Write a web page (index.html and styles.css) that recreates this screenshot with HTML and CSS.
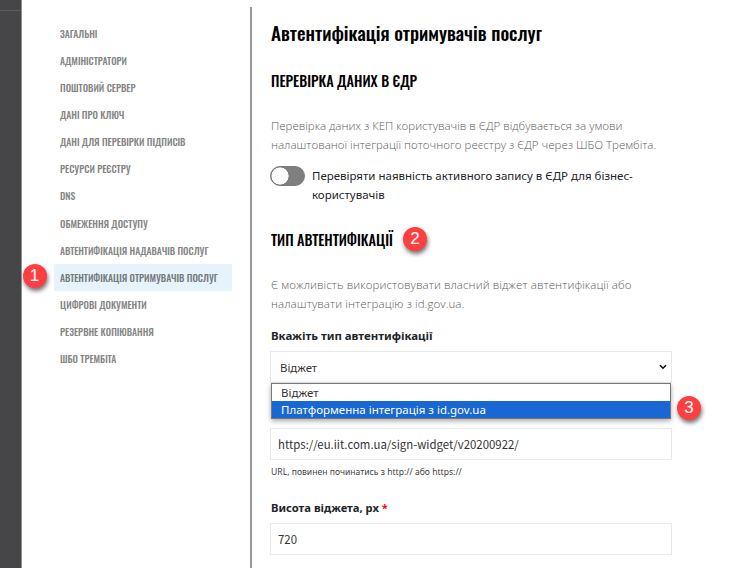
FILE: index.html
```html
<!DOCTYPE html>
<html lang="uk">
<head>
<meta charset="utf-8">
<title>Автентифікація отримувачів послуг</title>
<link rel="stylesheet" href="styles.css">
</head>
<body>
<div class="app">
  <aside class="rail"></aside>
  <nav class="menu">
    <a class="menu-item">Загальні</a>
    <a class="menu-item">Адміністратори</a>
    <a class="menu-item">Поштовий сервер</a>
    <a class="menu-item">Дані про ключ</a>
    <a class="menu-item">Дані для перевірки підписів</a>
    <a class="menu-item">Ресурси реєстру</a>
    <a class="menu-item">DNS</a>
    <a class="menu-item">Обмеження доступу</a>
    <a class="menu-item">Автентифікація надавачів послуг</a>
    <a class="menu-item active">Автентифікація отримувачів послуг<span class="badge badge-1">1</span></a>
    <a class="menu-item">Цифрові документи</a>
    <a class="menu-item">Резервне копіювання</a>
    <a class="menu-item">ШБО Трембіта</a>
  </nav>
  <main class="content">
    <h1>Автентифікація отримувачів послуг</h1>
    <h2>Перевірка даних в ЄДР</h2>
    <p class="note">Перевірка даних з КЕП користувачів в ЄДР відбувається за умови<br>налаштованої інтеграції поточного реєстру з ЄДР через ШБО Трембіта.</p>
    <div class="toggle-row">
      <span class="toggle"></span>
      <span class="toggle-label">Перевіряти наявність активного запису в ЄДР для бізнес-<br>користувачів</span>
    </div>
    <h2 class="type-title">Тип автентифікації<span class="badge badge-2">2</span></h2>
    <p class="note note-type">Є можливість використовувати власний віджет автентифікації або<br>налаштувати інтеграцію з id.gov.ua.</p>
    <div class="label">Вкажіть тип автентифікації</div>
    <div class="field select">
      <span>Віджет</span>
      <svg class="chevron" viewBox="0 0 8 6"><path d="M1 1.2 4 4.2 7 1.2" fill="none" stroke="#111" stroke-width="1.6"/></svg>
      <div class="options">
        <div class="option">Віджет</div>
        <div class="option selected">Платформенна інтеграція з id.gov.ua</div>
        <span class="badge badge-3">3</span>
      </div>
    </div>
    <div class="field url">https://eu.iit.com.ua/sign-widget/v20200922/</div>
    <div class="hint">URL, повинен починатись з http:// або https://</div>
    <div class="label label-height">Висота віджета, px <span class="required">*</span></div>
    <div class="field height">720</div>
  </main>
</div>
</body>
</html>
```
FILE: styles.css
```css
* { box-sizing: border-box; }
body { margin: 0; background: #fff; font-family: "Noto Sans", "Open Sans", sans-serif; color: #212529; }
.app { display: flex; width: 738px; height: 568px; overflow: hidden; }
.rail { flex: none; width: 22px; background: linear-gradient(#5a5a5c, #5a5a5c) 0 10px / 22px 1px no-repeat #464648; border-right: 1px solid #929294; }
.menu { flex: none; width: 228px; padding: 20px 18px 0 31.5px; }
.menu-item { display: block; position: relative; height: 27.08px; padding-left: 6.5px; font: 500 9.6px/28px Oswald, sans-serif; color: #858585; text-transform: uppercase; white-space: nowrap; }
.menu-item.active { background: #e6f3fb; color: #747a7e; }
.content { flex: 1; min-width: 0; margin-top: 7px; padding: 0 0 0 19px; border-left: 2px solid #9a9a9a; white-space: nowrap; }
h1 { margin: 12px 0 0; font: 500 19.14px/28px Oswald, sans-serif; color: #000; }
h2 { position: relative; margin: 22px 0 0; font: 500 14.3px/24px Oswald, sans-serif; color: #000; text-transform: uppercase; }
.note { margin: 23px 0 0; font-family: "Open Sans", sans-serif; font-weight: 300; font-size: 11.5px; line-height: 19px; color: #5c5c5c; }
.toggle-row { display: flex; gap: 7px; margin: 12px 0 0 -1px; }
.toggle { width: 35px; height: 20px; border-radius: 10px; border: 1px solid #7b7b7b; background: radial-gradient(circle at 9px 9px, #fff 8.3px, #7f7f7f 8.8px); }
.toggle-label { font-size: 11.49px; line-height: 19px; }
.type-title { margin-top: 24px; }
.note-type { margin-top: 23px; letter-spacing: .08px; }
.label { margin-top: 13px; font-size: 11.45px; font-weight: 700; line-height: 19px; }
.field { width: 402px; height: 32px; margin-left: -1px; border: 1px solid #e8e8f0; padding-left: 7px; font: 11.4px/31px "Noto Sans CJK JP", "Noto Sans", sans-serif; color: #333; }
.select { position: relative; margin-top: 6px; padding-left: 9px; font-family: "Noto Sans", sans-serif; }
.chevron { position: absolute; right: 4px; top: 12px; width: 8px; height: 6px; }
.options { position: absolute; z-index: 1; left: 0; top: 31px; width: 400px; height: 36px; border: 1px solid #777; background: #fff; box-shadow: 0 2px 5px rgba(0,0,0,.35); }
.option { height: 17px; padding-left: 9px; font-size: 11.5px; line-height: 17px; }
.option.selected { background: #1967d2; color: #fff; }
.url { margin-top: 45px; }
.hint { margin-top: 3px; font-size: 8.6px; line-height: 18px; color: #444; }
.label-height { margin-top: 17px; font-size: 11.23px; }
.required { color: #f00; }
.height { margin-top: 6px; }
.badge { position: absolute; z-index: 2; width: 24px; height: 24px; border-radius: 50%; background: #fd3f42; color: #fff; font: 400 17px/24px "Liberation Sans", sans-serif; text-align: center; box-shadow: 1px 3px 4px rgba(0,0,0,.55); }
.badge-1 { left: -31px; top: 0; }
.badge-2 { left: 132px; top: -1px; }
.badge-3 { left: 405px; top: 12px; }
```
